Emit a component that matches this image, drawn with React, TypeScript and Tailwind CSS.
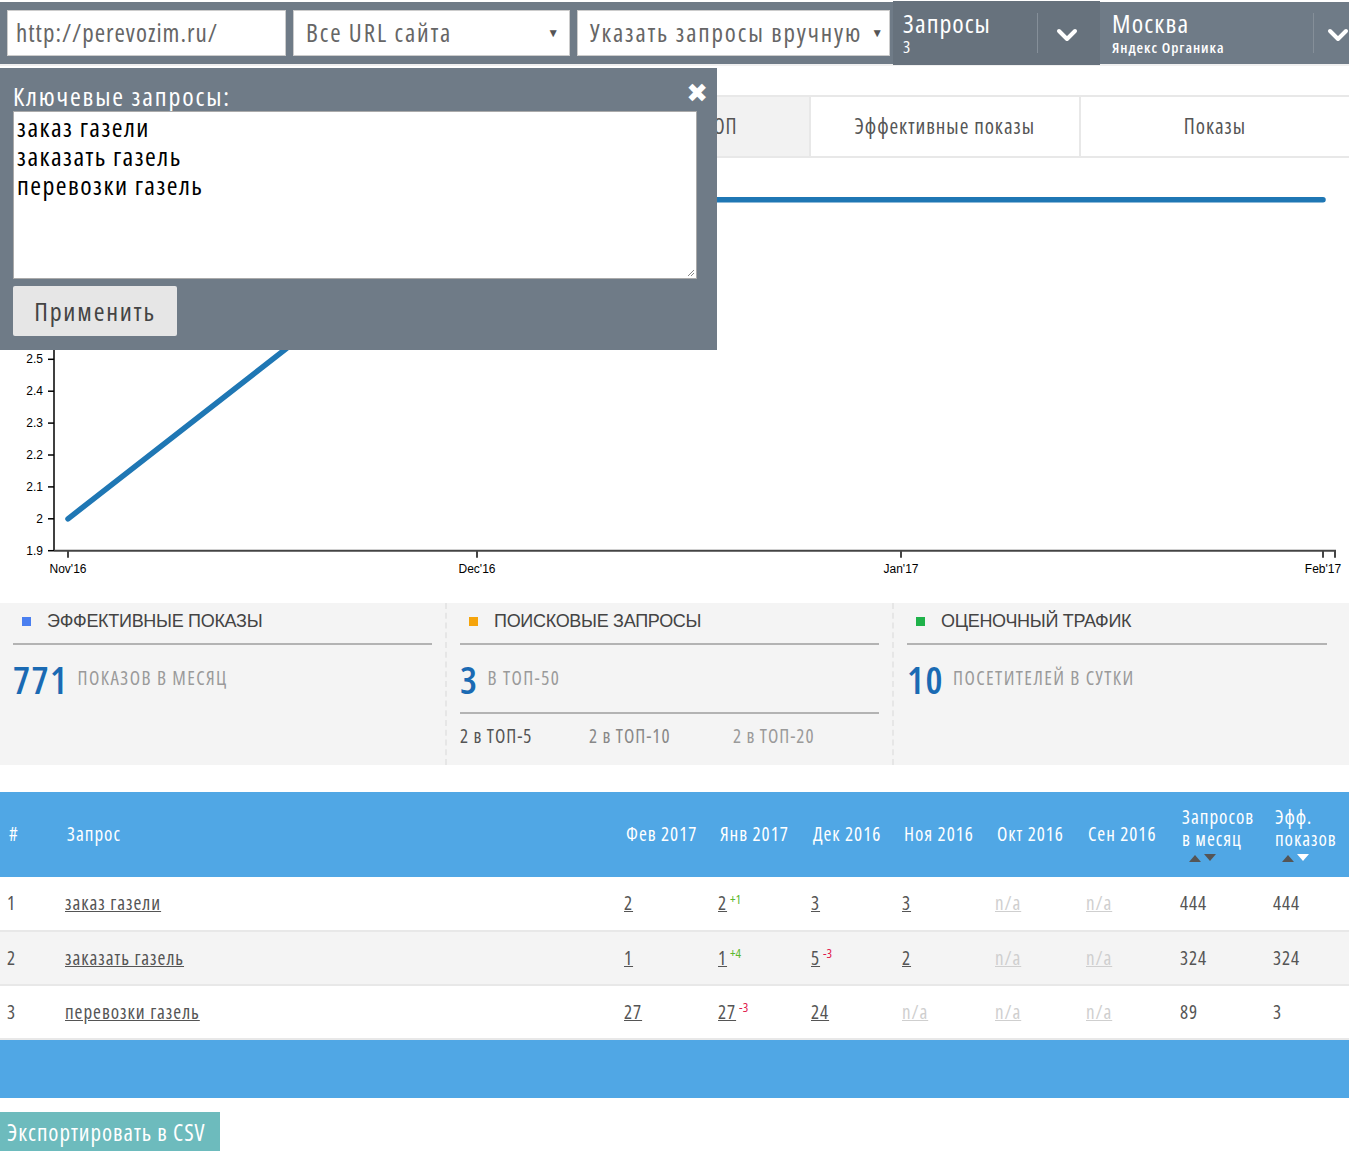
import React from 'react'

const cond = "font-['Open_Sans',sans-serif] [font-stretch:condensed] tracking-[0.06em]"

type Cell = { v: string; sup?: string; up?: boolean; na?: boolean }

const rows: { n: number; q: string; cells: Cell[]; total: string; eff: string; alt?: boolean }[] = [
  {
    n: 1,
    q: 'заказ газели',
    cells: [{ v: '2' }, { v: '2', sup: '+1', up: true }, { v: '3' }, { v: '3' }, { v: 'n/a', na: true }, { v: 'n/a', na: true }],
    total: '444',
    eff: '444',
  },
  {
    n: 2,
    q: 'заказать газель',
    cells: [{ v: '1' }, { v: '1', sup: '+4', up: true }, { v: '5', sup: '-3' }, { v: '2' }, { v: 'n/a', na: true }, { v: 'n/a', na: true }],
    total: '324',
    eff: '324',
    alt: true,
  },
  {
    n: 3,
    q: 'перевозки газель',
    cells: [{ v: '27' }, { v: '27', sup: '-3' }, { v: '24' }, { v: 'n/a', na: true }, { v: 'n/a', na: true }, { v: 'n/a', na: true }],
    total: '89',
    eff: '3',
  },
]

const months = ['Фев 2017', 'Янв 2017', 'Дек 2016', 'Ноя 2016', 'Окт 2016', 'Сен 2016']
const colW = ['w-[58px]', 'w-[559px]', 'w-[94px]', 'w-[93px]', 'w-[91px]', 'w-[93px]', 'w-[91px]', 'w-[94px]', 'w-[93px]', 'w-[83px]']

function Chevron() {
  return (
    <svg width="22" height="14" viewBox="0 0 22 14">
      <path d="M3 3 L11 11 L19 3" fill="none" stroke="white" strokeWidth="4" strokeLinecap="round" strokeLinejoin="round" />
    </svg>
  )
}

function SortArrows({ downWhite }: { downWhite?: boolean }) {
  return (
    <svg width="30" height="10" viewBox="0 0 30 10" className="block ml-[6px] mt-[3px]">
      <path d="M1 9 L7 2 L13 9 Z" fill="#555" />
      <path d="M16 1 L28 1 L22 8 Z" fill={downWhite ? '#fff' : '#555'} />
    </svg>
  )
}

function Chart() {
  const yTicks = [1.9, 2, 2.1, 2.2, 2.3, 2.4, 2.5, 2.6, 2.7, 2.8, 2.9, 3]
  // координаты страницы минус верх графика (158px)
  const yOf = (v: number) => 550.7 - (v - 1.9) * 319 - 158
  const axisY = yOf(1.9)
  const xTicks = [
    { x: 68, l: "Nov'16" },
    { x: 477, l: "Dec'16" },
    { x: 901, l: "Jan'17" },
    { x: 1323, l: "Feb'17" },
  ]
  return (
    <svg width="1349" height="445" className="block tracking-normal" style={{ fontFamily: 'Liberation Sans, Arial, sans-serif' }}>
      <line x1="54" y1={yOf(3) - 2} x2="54" y2={axisY} stroke="#000" strokeWidth="1.5" />
      {yTicks.map((t) => (
        <g key={t}>
          <line x1="48" x2="54" y1={yOf(t)} y2={yOf(t)} stroke="#000" strokeWidth="1.5" />
          <text x="43" y={yOf(t) + 4} fontSize="12" textAnchor="end" fill="#000">
            {t === 2 || t === 3 ? String(t) : t.toFixed(1)}
          </text>
        </g>
      ))}
      <line x1="54" y1={axisY} x2="1336" y2={axisY} stroke="#444" strokeWidth="2" />
      {xTicks.map((t) => (
        <g key={t.l}>
          <line x1={t.x} x2={t.x} y1={axisY} y2={axisY + 7} stroke="#444" strokeWidth="2" />
          <text x={t.x} y={axisY + 22} fontSize="12" textAnchor="middle" fill="#000">
            {t.l}
          </text>
        </g>
      ))}
      <line x1="1335" x2="1335" y1={axisY} y2={axisY + 7} stroke="#444" strokeWidth="2" />
      <polyline
        points={`68,${yOf(2)} 477,${yOf(3)} 901,${yOf(3)} 1323,${yOf(3)}`}
        fill="none"
        stroke="#1f77b4"
        strokeWidth="5.5"
        strokeLinecap="round"
        strokeLinejoin="round"
      />
    </svg>
  )
}

function Stat({ color, title, num, label, children, last }: { color: string; title: string; num: string; label: string; children?: React.ReactNode; last?: boolean }) {
  return (
    <div className={`pl-[13px] pt-[7px] ${last ? 'w-[455px] pr-[22px]' : 'w-[447px] pr-[13px] border-r-2 border-dashed border-[#e6e6e6]'}`}>
      <div className="flex items-center h-[22px]">
        <span className={`inline-block w-[9px] h-[9px] ml-[9px] ${color}`} />
        <span className="ml-[16px] text-[18px] text-[#444] font-['Liberation_Sans',sans-serif] tracking-[-0.3px] [font-stretch:100%]">{title}</span>
      </div>
      <div className="mt-[11px] h-[2px] bg-[#b3b3b3]" />
      <div className="flex items-center h-[67px]">
        <span className="text-[38px] leading-[40px] text-[#1a6ab3] font-semibold tracking-[0.04em]">{num}</span>
        <span className="ml-[9px] text-[19px] text-[#9a9a9a] uppercase tracking-[0.075em]">{label}</span>
      </div>
      {children}
    </div>
  )
}

export default function App() {
  return (
    <div className={`relative w-[1349px] h-[1151px] overflow-hidden bg-white ${cond}`}>
      {/* шапка */}
      <div className="mt-[2px] h-[64px] bg-[#6f7b87] flex items-center border-b-2 border-[#f0f0f0]">
        <div className="ml-[7px] w-[279px] h-[46px] bg-white border border-[#ccc] flex items-center px-[8px] text-[25px] text-[#666] tracking-[0.04em]">
          http://perevozim.ru/
        </div>
        <div className="ml-[7px] w-[277px] h-[46px] bg-white border border-[#ccc] flex items-center justify-between pl-[12px] pr-[8px] text-[25px] text-[#666] tracking-[0.075em]">
          <span>Все URL сайта</span>
          <span className="text-[12px] text-[#555]">▼</span>
        </div>
        <div className="ml-[7px] w-[313px] h-[46px] bg-white border border-[#ccc] flex items-center justify-between pl-[12px] pr-[4px] text-[25px] text-[#666] whitespace-nowrap tracking-[0.075em]">
          <span>Указать запросы вручную</span>
          <span className="text-[12px] text-[#555]">▼</span>
        </div>
        <div className="ml-[3px] w-[207px] h-[64px] bg-[#67727d] flex items-center">
          <div className="pl-[10px] w-[144px] text-white">
            <div className="text-[26px] leading-[28px]">Запросы</div>
            <div className="text-[17px] leading-[20px]">3</div>
          </div>
          <div className="w-px h-[40px] bg-[#858f99]" />
          <div className="flex-1 flex justify-center pt-[4px] pr-[4px]">
            <Chevron />
          </div>
        </div>
        <div className="w-[249px] h-[64px] flex items-center">
          <div className="pl-[12px] w-[213px] text-white">
            <div className="text-[26px] leading-[28px] tracking-[0.045em]">Москва</div>
            <div className="text-[15px] leading-[20px] font-semibold">Яндекс Органика</div>
          </div>
          <div className="w-px h-[40px] bg-[#858f99]" />
          <div className="flex-1 flex justify-end pt-[4px]">
            <Chevron />
          </div>
        </div>
      </div>

      {/* вкладки */}
      <div className="mt-[29px] flex border-y-2 border-[#e8e8e8] h-[63px] text-[21px] text-[#555]">
        {['Видимость', 'Средняя позиция', 'Позиции в ТОП', 'Эффективные показы', 'Показы'].map((t, i) => (
          <div key={t} className={`flex-1 flex items-center justify-center ${i > 0 ? 'border-l-2 border-[#e8e8e8]' : ''} ${i === 2 ? 'bg-[#f2f2f2]' : ''}`}>
            {t}
          </div>
        ))}
      </div>

      <Chart />

      {/* сводка */}
      <div className="flex h-[162px] bg-[#f4f4f4]">
        <Stat color="bg-[#4a7ff0]" title="ЭФФЕКТИВНЫЕ ПОКАЗЫ" num="771" label="показов в месяц" />
        <Stat color="bg-[#f5a40b]" title="ПОИСКОВЫЕ ЗАПРОСЫ" num="3" label="в ТОП-50">
          <div className="h-[2px] bg-[#b3b3b3]" />
          <div className="flex text-[19px] pt-[8px]">
            <span className="w-[129px] text-[#555]">2 в ТОП-5</span>
            <span className="w-[144px] text-[#888]">2 в ТОП-10</span>
            <span className="text-[#9a9a9a]">2 в ТОП-20</span>
          </div>
        </Stat>
        <Stat color="bg-[#1fb24a]" title="ОЦЕНОЧНЫЙ ТРАФИК" num="10" label="посетителей в сутки" last />
      </div>

      {/* таблица */}
      <table className="mt-[27px] w-[1349px] table-fixed border-collapse">
        <colgroup>
          {colW.map((w, i) => (
            <col key={i} className={w} />
          ))}
        </colgroup>
        <thead>
          <tr className="bg-[#50a7e5] h-[85px] text-white text-[19px] text-left">
            <th className="font-normal pl-[9px]">#</th>
            <th className="font-normal pl-[9px]">Запрос</th>
            {months.map((m) => (
              <th key={m} className="font-normal pl-[9px] whitespace-nowrap">
                {m}
              </th>
            ))}
            <th className="font-normal pl-[9px] leading-[22px]">
              <div>Запросов</div>
              <div>в месяц</div>
              <SortArrows />
            </th>
            <th className="font-normal pl-[9px] leading-[22px]">
              <div>Эфф.</div>
              <div>показов</div>
              <SortArrows downWhite />
            </th>
          </tr>
        </thead>
        <tbody className="text-[19px] text-[#555]">
          {rows.map((r) => (
            <tr key={r.n} className={`h-[54px] border-b-2 border-[#e8e8e8] ${r.alt ? 'bg-[#f4f4f4]' : 'bg-white'}`}>
              <td className="pl-[7px]">{r.n}</td>
              <td className="pl-[7px]">
                <a className="underline">{r.q}</a>
              </td>
              {r.cells.map((c, i) => (
                <td key={i} className="pl-[7px] whitespace-nowrap">
                  <a className={`underline ${c.na ? 'text-[#cfcfcf]' : ''}`}>{c.v}</a>
                  {c.sup && <sup className={`ml-[3px] text-[13px] tracking-normal ${c.up ? 'text-[#5cb82e]' : 'text-[#e0184a]'}`}>{c.sup}</sup>}
                </td>
              ))}
              <td className="pl-[7px]">{r.total}</td>
              <td className="pl-[7px]">{r.eff}</td>
            </tr>
          ))}
        </tbody>
      </table>
      <div className="h-[58px] bg-[#50a7e5]" />

      <div className="mt-[14px] flex items-center w-[220px] h-[40px] pl-[7px] bg-[#6dbbbd] text-white text-[23px] whitespace-nowrap">
        Экспортировать в CSV
      </div>

      {/* окно ключевых запросов */}
      <div className="absolute left-0 top-[68px] w-[717px] h-[282px] bg-[#6f7b87] px-[13px] pt-[13px]">
        <div className="flex justify-between items-start">
          <span className="text-[26px] leading-[30px] text-white tracking-[0.07em]">Ключевые запросы:</span>
          <span className="mr-[-4px] mt-[2px] text-white text-[26px] leading-[20px] font-bold font-['DejaVu_Sans',sans-serif] [font-stretch:100%] tracking-normal">✖</span>
        </div>
        <div className="relative w-[684px] h-[168px] bg-white border border-[#aaa] px-[3px] pt-[1px] text-[26px] leading-[29px] text-black tracking-[0.055em]">
          <div>заказ газели</div>
          <div>заказать газель</div>
          <div>перевозки газель</div>
          <svg width="8" height="8" viewBox="0 0 8 8" className="absolute right-[1px] bottom-[1px]">
            <path d="M7 1 L1 7 M7 4 L4 7" stroke="#888" strokeWidth="1" />
          </svg>
        </div>
        <div className="mt-[7px] w-[164px] h-[50px] bg-[#e6e6e6] rounded-[2px] flex items-center justify-center text-[26px] text-[#444] tracking-[0.07em]">
          Применить
        </div>
      </div>
    </div>
  )
}
